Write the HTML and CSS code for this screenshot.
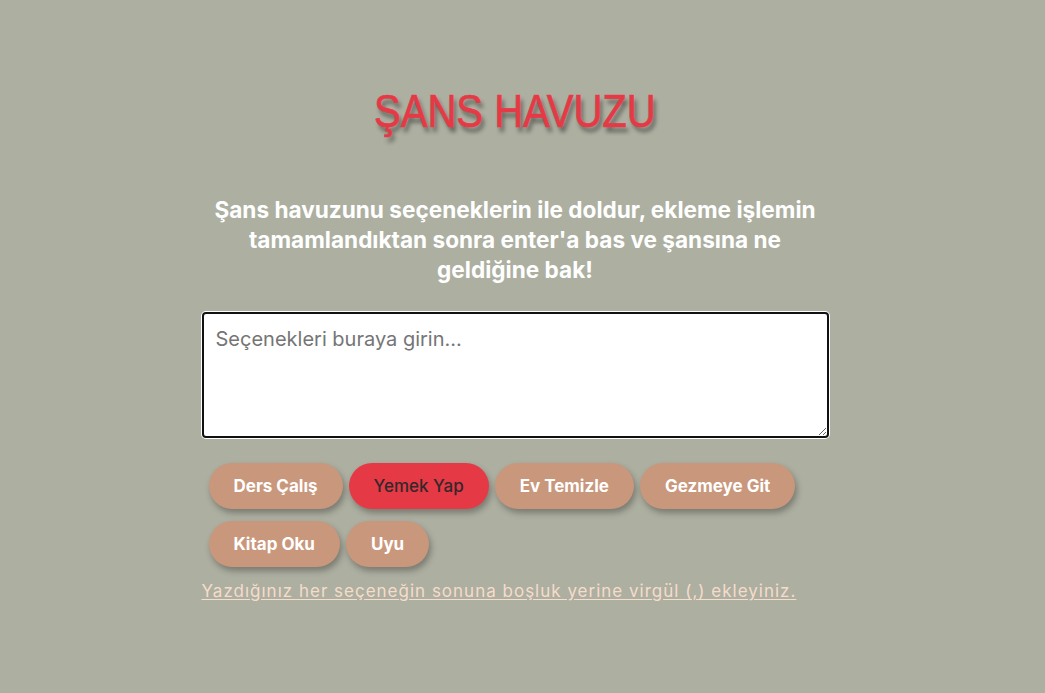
FILE: index.html
```html
<!DOCTYPE html>
<html lang="tr">
<head>
<meta charset="utf-8">
<title>Şans Havuzu</title>
<link rel="stylesheet" href="styles.css">
</head>
<body>
<main class="page">
  <h1 class="title">ŞANS HAVUZU</h1>
  <p class="intro">Şans havuzunu seçeneklerin ile doldur, ekleme işlemin tamamlandıktan sonra enter'a bas ve şansına ne geldiğine bak!</p>
  <div class="panel">
    <textarea class="choices" placeholder="Seçenekleri buraya girin..."></textarea>
    <div class="tags">
      <span class="tag">Ders Çalış</span>
      <span class="tag tag-active">Yemek Yap</span>
      <span class="tag">Ev Temizle</span>
      <span class="tag">Gezmeye Git</span>
      <span class="tag">Kitap Oku</span>
      <span class="tag">Uyu</span>
    </div>
    <a class="hint" href="#">Yazdığınız her seçeneğin sonuna boşluk yerine virgül (,) ekleyiniz.</a>
  </div>
</main>
</body>
</html>
```

FILE: styles.css
```css
* { box-sizing: border-box; }

html, body {
  margin: 0;
  padding: 0;
  background: #adafa1;
  height: 100%;
}

body {
  font-family: Inter, "Noto Sans", sans-serif;
}

.page {
  display: flex;
  flex-direction: column;
  align-items: center;
  padding: 85px 15px 0 0;
}

.title {
  margin: 0;
  font-family: "Liberation Sans", Arial, sans-serif;
  font-weight: 400;
  font-size: 46px;
  line-height: 53px;
  color: #e63946;
  -webkit-text-stroke: 0.7px #e63946;
  text-shadow: 3px 5px 5px rgba(0, 0, 0, 0.45);
  transform: scaleX(0.87);
}

.intro {
  margin: 57px 0 0;
  width: 630px;
  text-align: center;
  color: #ffffff;
  font-size: 22.6px;
  line-height: 30px;
  font-weight: 700;
}

.panel {
  margin-top: 27px;
  width: 627px;
  display: flex;
  flex-direction: column;
}

.choices {
  display: block;
  width: 627px;
  height: 126px;
  margin: 0;
  padding: 11px 12px;
  border: 2px solid #111;
  border-radius: 4px;
  box-shadow: 0 0 0 1px #ffffff;
  background: #ffffff;
  font-family: Inter, "Noto Sans", sans-serif;
  font-size: 20px;
  line-height: 28px;
  color: #222;
  resize: vertical;
  outline: none;
}

.choices::placeholder {
  color: #757575;
}

.tags {
  display: flex;
  flex-wrap: wrap;
  gap: 12px 6px;
  margin-top: 25px;
  padding-left: 7px;
}

.tag {
  display: inline-block;
  padding: 13px 25px;
  border-radius: 23px;
  background: #c9977c;
  color: #ffffff;
  font-size: 17px;
  line-height: 20px;
  font-weight: 700;
  box-shadow: 2px 4px 6px rgba(0, 0, 0, 0.3);
}

.tag-active {
  background: #e63946;
  color: #33282a;
  font-weight: 500;
}

.hint {
  margin-top: 13px;
  align-self: flex-start;
  color: #f6dccb;
  font-size: 17px;
  line-height: 22px;
  letter-spacing: 1px;
  text-decoration: underline;
  text-underline-offset: 2px;
}
```
